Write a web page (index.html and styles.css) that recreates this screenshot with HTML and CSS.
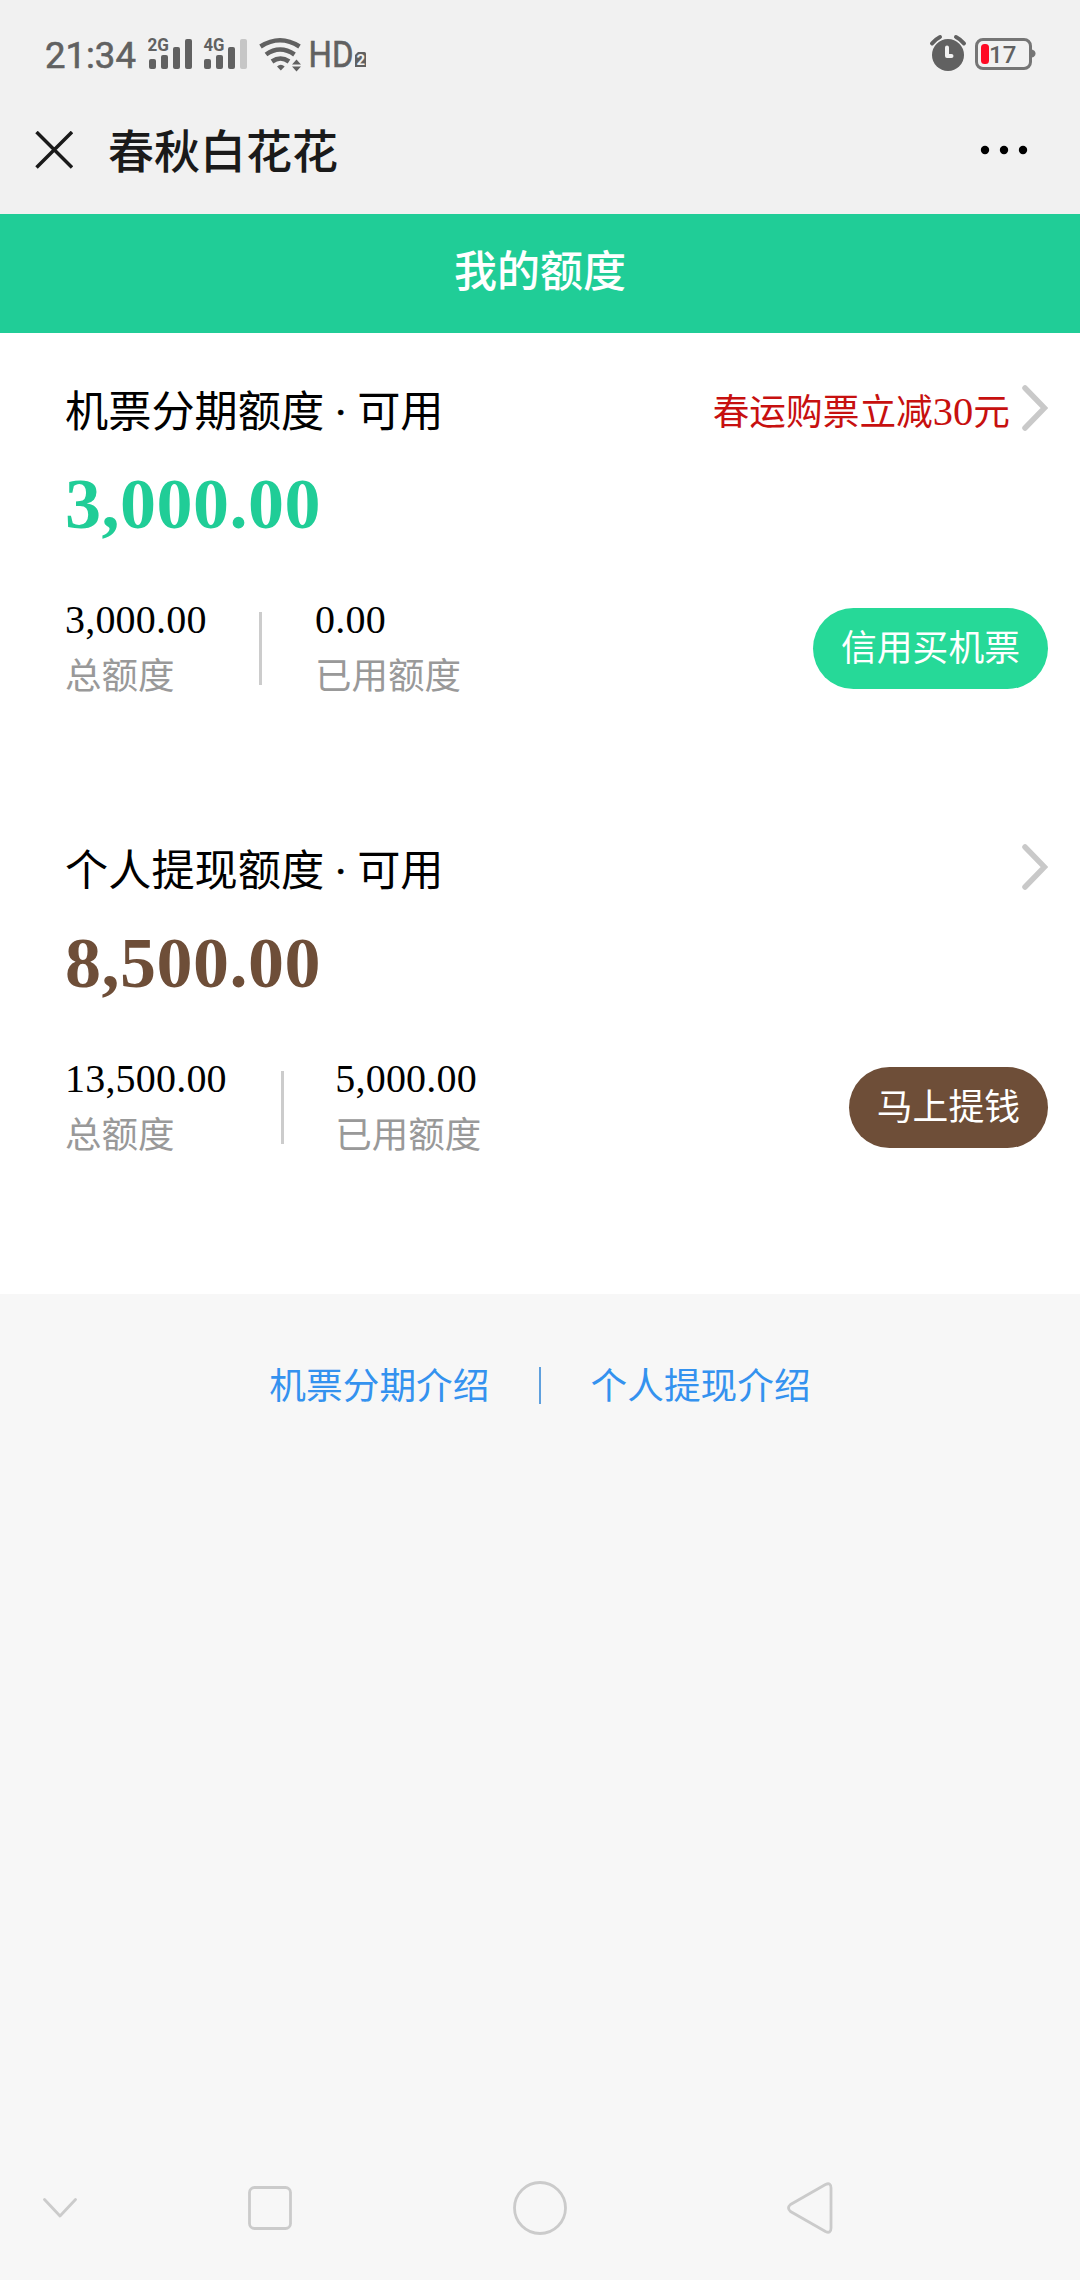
FILE: index.html
```html
<!DOCTYPE html>
<html lang="zh-CN">
<head>
<meta charset="utf-8">
<meta name="viewport" content="width=device-width">
<title>春秋白花花</title>
<link rel="stylesheet" href="styles.css">
</head>
<body>
<div class="screen">
  <div class="status-bar">
    <span class="clock">21:34</span>
    <svg class="signals" width="220" height="40" viewBox="148 35 220 40" fill="#616161">
      <text class="net" x="147.500" y="51" textLength="21.500" lengthAdjust="spacingAndGlyphs">2G</text>
      <rect x="149" y="59" width="7" height="10" rx="2"/>
      <rect x="161" y="55" width="7" height="14" rx="2"/>
      <rect x="173" y="47" width="7" height="22" rx="2"/>
      <rect x="185" y="39" width="7" height="30" rx="2"/>
      <text class="net" x="203.500" y="51" textLength="21" lengthAdjust="spacingAndGlyphs">4G</text>
      <rect x="204" y="59" width="7" height="10" rx="2"/>
      <rect x="216" y="55" width="7" height="14" rx="2"/>
      <rect x="228" y="47" width="7" height="22" rx="2"/>
      <rect x="240" y="39" width="7" height="30" rx="2" fill="#c6c6c6"/>
      <g fill="none" stroke="#616161" stroke-width="4.600">
        <path d="M260.500 46.500Q280 34 299.500 46.500"/>
        <path d="M266 54.500Q280 44.500 294.500 54.500"/>
        <path d="M272 61.500Q280.500 55.500 289 61.500"/>
      </g>
      <path d="M277 66.500Q280.800 63 284.700 66.500L280.800 70.500Z"/>
      <path d="M292 64.500L296.500 59.500L301 64.500ZM292 66.500H301L296.500 71.500Z"/>
      <text class="hd" x="308.500" y="67" textLength="45" lengthAdjust="spacingAndGlyphs">HD</text>
      <path d="M358 52H364.500Q366 52 366 53.500V67H355V55Z"/>
      <text class="sim" x="356.500" y="65">2</text>
    </svg>
    <svg class="power" width="110" height="40" viewBox="928 33 110 40">
      <circle cx="948" cy="55" r="16" fill="#616161"/>
      <path d="M932 43.500Q935 39.500 940 37M956 37Q961 39.500 964 43.500" fill="none" stroke="#616161" stroke-width="4" stroke-linecap="round"/>
      <path d="M947 47.500V56H951.500" fill="none" stroke="#f1f1f1" stroke-width="4" stroke-linecap="round" stroke-linejoin="round"/>
      <rect x="976.500" y="39.500" width="54" height="29" rx="6.500" fill="none" stroke="#757575" stroke-width="3"/>
      <path d="M1032 49.500Q1035.500 50.500 1035.500 53.500Q1035.500 56.500 1032 57.500Z" fill="#757575"/>
      <rect x="981" y="44" width="8" height="20" rx="3.500" fill="#ff0a24"/>
      <text class="charge" x="989" y="63">17</text>
    </svg>
  </div>
  <div class="app-bar">
    <svg width="38" height="38" viewBox="0 0 38 38"><path d="M1.500 1L37 36.500M37 1L1.500 36.500" stroke="#1a1a1a" stroke-width="3.500"/></svg>
    <h1 class="app-title">春秋白花花</h1>
    <svg width="48" height="10" viewBox="0 0 48 10"><circle cx="5" cy="5" r="4.200"/><circle cx="24" cy="5" r="4.200"/><circle cx="43" cy="5" r="4.200"/></svg>
  </div>
  <h2 class="page-title">我的额度</h2>
  <main class="cards">
    <section class="card">
      <div class="card-head">
        <div class="card-name">机票分期额度<span class="mid">·</span>可用</div>
        <div class="promo">春运购票立减<span class="num">30</span>元</div>
        <svg class="arrow" width="26" height="46" viewBox="0 0 26 46"><path d="M3 3L22.500 23L3 43" fill="none" stroke="#c9c9c9" stroke-width="5.500" stroke-linecap="round"/></svg>
      </div>
      <div class="available green">3,000.00</div>
      <div class="card-foot">
        <div class="stat"><div class="value">3,000.00</div><div class="label">总额度</div></div>
        <div class="rule"></div>
        <div class="stat"><div class="value">0.00</div><div class="label">已用额度</div></div>
        <button class="action buy">信用买机票</button>
      </div>
    </section>
    <section class="card">
      <div class="card-head">
        <div class="card-name">个人提现额度<span class="mid">·</span>可用</div>
        <svg class="arrow" width="26" height="46" viewBox="0 0 26 46"><path d="M3 3L22.500 23L3 43" fill="none" stroke="#c9c9c9" stroke-width="5.500" stroke-linecap="round"/></svg>
      </div>
      <div class="available brown">8,500.00</div>
      <div class="card-foot">
        <div class="stat"><div class="value">13,500.00</div><div class="label">总额度</div></div>
        <div class="rule rule-wide"></div>
        <div class="stat"><div class="value">5,000.00</div><div class="label">已用额度</div></div>
        <button class="action cash">马上提钱</button>
      </div>
    </section>
  </main>
  <div class="links">
    <a>机票分期介绍</a>
    <span class="link-rule"></span>
    <a>个人提现介绍</a>
  </div>
  <nav class="nav-bar">
    <svg width="34" height="20" viewBox="0 0 34 20"><path d="M1.500 1.500L17 18L32.500 1.500"/></svg>
    <svg width="44" height="44" viewBox="0 0 44 44"><rect x="1.500" y="1.500" width="41" height="41" rx="5"/></svg>
    <svg width="54" height="54" viewBox="0 0 54 54"><circle cx="27" cy="27" r="25.500"/></svg>
    <svg width="46" height="52" viewBox="0 0 46 52"><path d="M38.500 2.500L3.500 22.500Q-.500 26 3.500 29.500L38.500 49.500Q44 52 44 46V6Q44 0 38.500 2.500Z"/></svg>
  </nav>
</div>
</body>
</html>
```
FILE: styles.css
```css
* { box-sizing: border-box; }
body {
  margin: 0;
  font-family: "Noto Sans CJK SC", sans-serif;
  color: #000;
}
.screen {
  width: 1080px;
  height: 2280px;
  display: flex;
  flex-direction: column;
  background: #f7f7f7;
}
h1, h2 { margin: 0; font-weight: 500; }
svg { display: block; flex: none; }

.status-bar {
  height: 108px;
  padding: 0 42px 0 45px;
  display: flex;
  align-items: center;
  background: #f1f1f1;
}
.clock {
  width: 103px;
  margin-top: 3px;
  font: 400 36.500px/40px Roboto, sans-serif;
  color: #616161;
  -webkit-text-stroke: .6px #616161;
}
.signals { margin-top: 2px; }
.power { margin: 0 0 2px auto; }
.net { font: 700 17.500px Roboto, sans-serif; }
.hd { font: 400 36px Roboto, sans-serif; stroke: #616161; stroke-width: .6px; }
.sim { font: 700 15px Roboto, sans-serif; fill: #f1f1f1; }
.charge { font: 500 24px Roboto, sans-serif; fill: #616161; }

.app-bar {
  height: 106px;
  padding: 0 52px 22px 35px;
  display: flex;
  align-items: center;
  background: #f1f1f1;
}
.app-title {
  flex: 1;
  margin-left: 35px;
  padding-bottom: 5px;
  font-size: 46px;
  line-height: 60px;
  color: #1a1a1a;
}
.page-title {
  height: 119px;
  font-size: 43px;
  line-height: 109px;
  text-align: center;
  color: #fff;
  background: #20cd97;
}
.cards {
  height: 961px;
  background: #fff;
}
.card {
  height: 459px;
  padding: 47px 32px 0 65px;
}
.card-head {
  height: 60px;
  display: flex;
  align-items: center;
}
.card-name {
  flex: 1;
  font-size: 43.200px;
  line-height: 60px;
  white-space: nowrap;
}
.mid {
  display: inline-block;
  width: 33px;
  font-family: "Liberation Serif", serif;
  text-align: center;
  -webkit-text-stroke: .5px #000;
}
.promo {
  padding-bottom: 2px;
  font-size: 36.700px;
  line-height: 60px;
  color: #c7100f;
}
.num { font: 40.500px/40px "Liberation Serif", serif; }
.arrow { margin: -4px 0 0 12px; }
.available {
  height: 80px;
  margin-top: 24px;
  font: 700 72px/80px "Liberation Serif", serif;
  letter-spacing: .5px;
}
.green { color: #20cd97; }
.brown { color: #6e4e38; }
.card-foot {
  height: 110px;
  margin-top: 57px;
  display: flex;
  align-items: flex-start;
}
.stat {
  display: flex;
  flex-direction: column;
}
.value {
  height: 48px;
  font: 40px/38px "Liberation Serif", serif;
  letter-spacing: .2px;
}
.label {
  height: 50px;
  font-size: 36.500px;
  line-height: 50px;
  color: #999;
}
.rule {
  width: 3px;
  height: 73px;
  margin: 11px 53px 0 52.500px;
  background: #ccc;
}
.rule-wide { margin: 11px 51.500px 0 54px; }
.action {
  height: 81px;
  margin: 7px 0 0 auto;
  padding: 0 28px 7px;
  border: 0;
  border-radius: 41px;
  font: 400 35.800px/50px "Noto Sans CJK SC", sans-serif;
  color: #fff;
}
.buy { background: #26d998; }
.cash { background: #6e4e38; }

.links {
  height: 182px;
  display: flex;
  align-items: center;
  justify-content: center;
  font-size: 36.700px;
  line-height: 50px;
  color: #3492ef;
}
.links a { padding-bottom: 4px; }
.link-rule {
  width: 2px;
  height: 37px;
  margin: 0 49.500px;
  background: #5fa0de;
}
.nav-bar {
  height: 144px;
  margin-top: auto;
  padding-left: 43px;
  display: grid;
  grid-template-columns: 205px 265px 274px 46px;
  align-items: center;
}
.nav-bar svg {
  fill: none;
  stroke: #cbcbcb;
  stroke-width: 2.800;
  stroke-linecap: round;
  stroke-linejoin: round;
}
```
